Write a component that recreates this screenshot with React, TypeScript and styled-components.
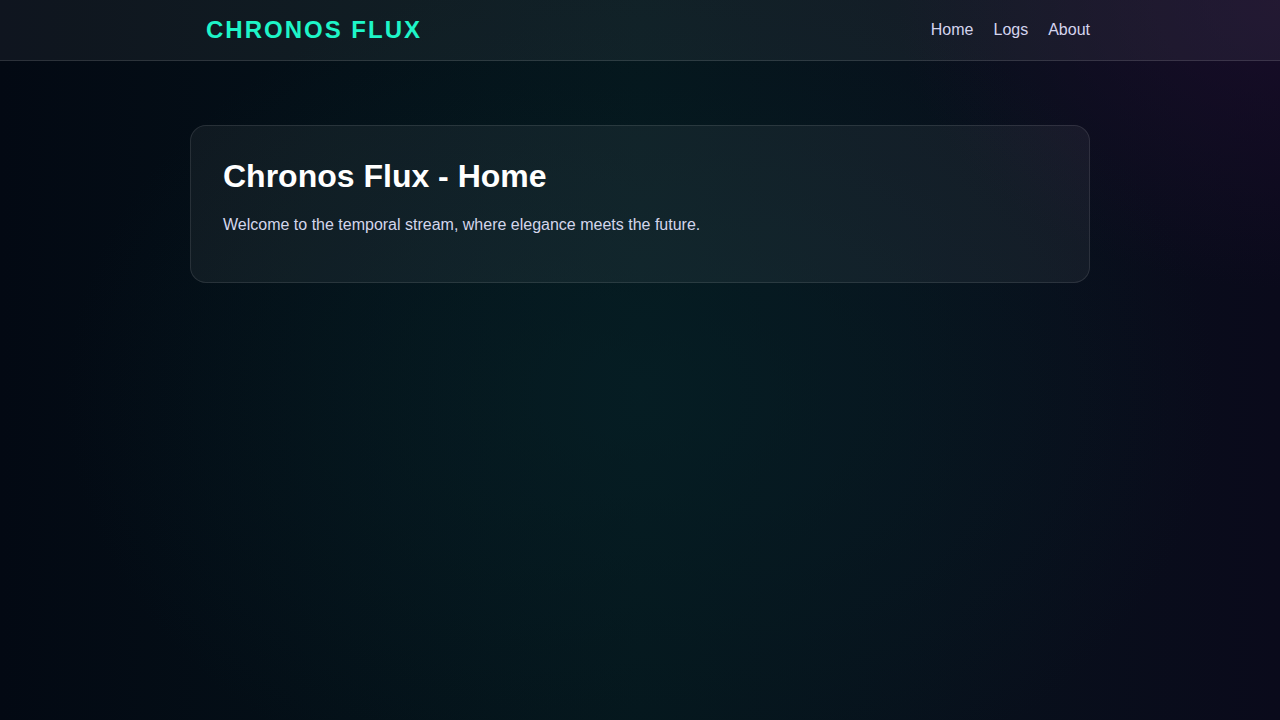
import styled, { createGlobalStyle } from "styled-components"

const GlobalStyle = createGlobalStyle`
  html, body {
    margin: 0;
    padding: 0;
  }
  body {
    min-height: 100vh;
    font-family: "Liberation Sans", Arial, sans-serif;
    color: #e8e8f4;
    background:
      radial-gradient(ellipse 45% 60% at 50% 55%, rgba(6, 34, 40, 0.6) 0%, rgba(6, 34, 40, 0) 100%),
      radial-gradient(ellipse 30% 40% at 100% 0%, rgba(30, 14, 46, 0.7) 0%, rgba(30, 14, 46, 0) 100%),
      linear-gradient(90deg, #030913 0%, #05161c 50%, #0a0a1b 100%);
    background-attachment: fixed;
  }
`

const navItems = ["Home", "Logs", "About"]

export default function App() {
  return (
    <>
      <GlobalStyle />
      <Page>
        <Header>
          <HeaderInner>
            <Logo>CHRONOS FLUX</Logo>
            <Nav>
              {navItems.map((item) => (
                <NavLink key={item} href="#">
                  {item}
                </NavLink>
              ))}
            </Nav>
          </HeaderInner>
        </Header>
        <Main>
          <Card>
            <Title>Chronos Flux - Home</Title>
            <Text>Welcome to the temporal stream, where elegance meets the future.</Text>
          </Card>
        </Main>
      </Page>
    </>
  )
}

const Page = styled.div`
  min-height: 100vh;
  display: flex;
  flex-direction: column;
`

const Header = styled.header`
  height: 60px;
  background: rgba(255, 255, 255, 0.05);
  border-bottom: 1px solid rgba(255, 255, 255, 0.12);
  display: flex;
  justify-content: center;
`

const HeaderInner = styled.div`
  width: 900px;
  display: flex;
  align-items: center;
  justify-content: space-between;
`

const Logo = styled.div`
  padding-left: 16px;
  font-size: 24px;
  font-weight: 700;
  letter-spacing: 2px;
  color: #1ef5c8;
`

const Nav = styled.nav`
  display: flex;
  gap: 20px;
`

const NavLink = styled.a`
  font-size: 16px;
  color: #d4d4ee;
  text-decoration: none;
`

const Main = styled.main`
  display: flex;
  justify-content: center;
  padding-top: 64px;
`

const Card = styled.section`
  width: 900px;
  box-sizing: border-box;
  padding: 32px;
  border-radius: 16px;
  border: 1px solid rgba(255, 255, 255, 0.1);
  background: rgba(255, 255, 255, 0.05);
`

const Title = styled.h1`
  margin: 0 0 17px;
  font-size: 32px;
  line-height: 37px;
  font-weight: 700;
  color: #ffffff;
`

const Text = styled.p`
  margin: 0 0 12px;
  font-size: 16px;
  line-height: 1.6;
  color: #d4d6ec;
`
